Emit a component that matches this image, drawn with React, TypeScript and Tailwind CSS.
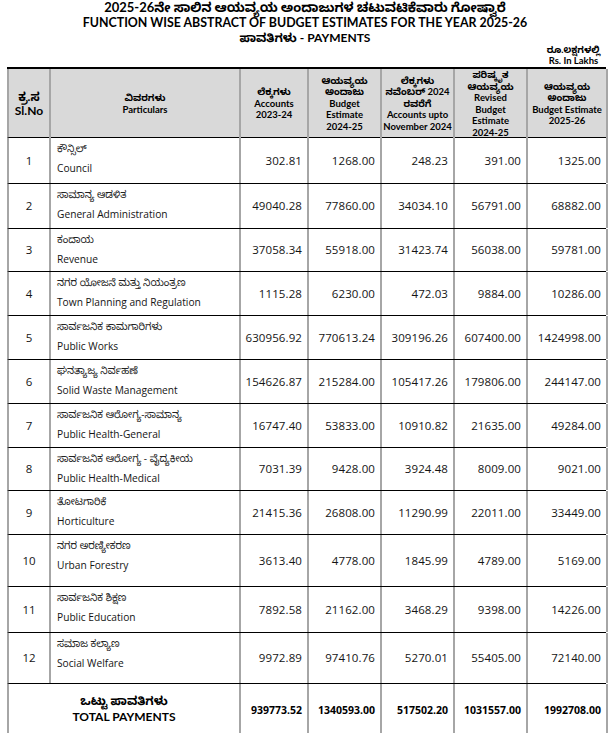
import * as React from 'react';

type Row = {
  no: number;
  kn: string;
  en: string;
  vals: string[];
  h: string;
};

const rows: Row[] = [
  { no: 1, kn: 'ಕೌನ್ಸಿಲ್', en: 'Council', vals: ['302.81', '1268.00', '248.23', '391.00', '1325.00'], h: 'h-[46px]' },
  { no: 2, kn: 'ಸಾಮಾನ್ಯ ಆಡಳಿತ', en: 'General Administration', vals: ['49040.28', '77860.00', '34034.10', '56791.00', '68882.00'], h: 'h-[45px]' },
  { no: 3, kn: 'ಕಂದಾಯ', en: 'Revenue', vals: ['37058.34', '55918.00', '31423.74', '56038.00', '59781.00'], h: 'h-[43px]' },
  { no: 4, kn: 'ನಗರ ಯೋಜನೆ ಮತ್ತು ನಿಯಂತ್ರಣ', en: 'Town Planning and Regulation', vals: ['1115.28', '6230.00', '472.03', '9884.00', '10286.00'], h: 'h-[44px]' },
  { no: 5, kn: 'ಸಾರ್ವಜನಿಕ ಕಾಮಗಾರಿಗಳು', en: 'Public Works', vals: ['630956.92', '770613.24', '309196.26', '607400.00', '1424998.00'], h: 'h-[44px]' },
  { no: 6, kn: 'ಘನತ್ಯಾಜ್ಯ ನಿರ್ವಹಣೆ', en: 'Solid Waste Management', vals: ['154626.87', '215284.00', '105417.26', '179806.00', '244147.00'], h: 'h-[44px]' },
  { no: 7, kn: 'ಸಾರ್ವಜನಿಕ ಆರೋಗ್ಯ-ಸಾಮಾನ್ಯ', en: 'Public Health-General', vals: ['16747.40', '53833.00', '10910.82', '21635.00', '49284.00'], h: 'h-[44px]' },
  { no: 8, kn: 'ಸಾರ್ವಜನಿಕ ಆರೋಗ್ಯ - ವೈದ್ಯಕೀಯ', en: 'Public Health-Medical', vals: ['7031.39', '9428.00', '3924.48', '8009.00', '9021.00'], h: 'h-[43px]' },
  { no: 9, kn: 'ತೋಟಗಾರಿಕೆ', en: 'Horticulture', vals: ['21415.36', '26808.00', '11290.99', '22011.00', '33449.00'], h: 'h-[44px]' },
  { no: 10, kn: 'ನಗರ ಅರಣ್ಯೀಕರಣ', en: 'Urban Forestry', vals: ['3613.40', '4778.00', '1845.99', '4789.00', '5169.00'], h: 'h-[52px]' },
  { no: 11, kn: 'ಸಾರ್ವಜನಿಕ ಶಿಕ್ಷಣ', en: 'Public Education', vals: ['7892.58', '21162.00', '3468.29', '9398.00', '14226.00'], h: 'h-[46px]' },
  { no: 12, kn: 'ಸಮಾಜ ಕಲ್ಯಾಣ', en: 'Social Welfare', vals: ['9972.89', '97410.76', '5270.01', '55405.00', '72140.00'], h: 'h-[51px]' },
];

const totals = ['939773.52', '1340593.00', '517502.20', '1031557.00', '1992708.00'];

const cols = 'grid grid-cols-[42px_190px_68px_73px_73px_73px_80px]';
const vline = 'border-r-2 border-[#a6a6a6]';
const body = "font-['Open_Sans','Noto_Sans_Kannada','Noto_Sans',sans-serif]";
const head = "font-['Lato','Noto_Sans_Kannada','Noto_Sans',sans-serif]";

function HeadCell({ lines }: { lines: string[] }) {
  return (
    <div className={`${vline} flex flex-col items-center justify-center text-center text-[9.5px] leading-[11.5px] font-bold whitespace-nowrap`}>
      {lines.map((l, i) => (
        <span key={i}>{l}</span>
      ))}
    </div>
  );
}

export default function App() {
  return (
    <div className={`w-[610px] bg-white text-black ${body}`}>
      <div className={`${head} font-bold text-center`}>
        <div className="text-[13px] leading-[15px]">2025-26ನೇ ಸಾಲಿನ ಆಯವ್ಯಯ ಅಂದಾಜುಗಳ ಚಟುವಟಿಕೆವಾರು ಗೋಷ್ವಾರೆ</div>
        <div className="text-[12.4px] leading-[15px]">FUNCTION WISE ABSTRACT OF BUDGET ESTIMATES FOR THE YEAR 2025-26</div>
        <div className="text-[12px] leading-[15px]">ಪಾವತಿಗಳು - PAYMENTS</div>
      </div>
      <div className="flex justify-end pr-[10px]">
        <div className={`${head} font-bold text-[9.5px] leading-[10.5px] text-center`}>
          <div>ರೂ.ಲಕ್ಷಗಳಲ್ಲಿ</div>
          <div>Rs. In Lakhs</div>
        </div>
      </div>

      <div className="ml-[7px] w-[599px] mt-[1px] border-t-2 border-black">
        {/* header */}
        <div className={`${cols} h-[69px] bg-[#d9d9d9] border-b border-black border-l-2 border-l-[#a6a6a6] ${head}`}>
          <div className={`${vline} flex flex-col items-center justify-center text-center text-[12px] leading-[14px] font-bold`}>
            <span>ಕ್ರ.ಸ</span>
            <span>Sl.No</span>
          </div>
          <HeadCell lines={['ವಿವರಗಳು', 'Particulars']} />
          <HeadCell lines={['ಲೆಕ್ಕಗಳು', 'Accounts', '2023-24']} />
          <HeadCell lines={['ಆಯವ್ಯಯ', 'ಅಂದಾಜು', 'Budget', 'Estimate', '2024-25']} />
          <HeadCell lines={['ಲೆಕ್ಕಗಳು', 'ನವೆಂಬರ್ 2024', 'ರವರೆಗೆ', 'Accounts upto', 'November 2024']} />
          <HeadCell lines={['ಪರಿಷ್ಕೃತ', 'ಆಯವ್ಯಯ', 'Revised', 'Budget', 'Estimate', '2024-25']} />
          <HeadCell lines={['ಆಯವ್ಯಯ', 'ಅಂದಾಜು', 'Budget Estimate', '2025-26']} />
        </div>

        {rows.map((r) => (
          <div key={r.no} className={`${cols} ${r.h} border-b border-black border-l-2 border-l-[#a6a6a6] text-[#141414]`}>
            <div className={`${vline} flex items-center justify-center text-[11.5px]`}>{r.no}</div>
            <div className={`${vline} flex flex-col pl-[6px] pt-[1px]`}>
              <span className="text-[10px] leading-[18px] text-[#222]">{r.kn}</span>
              <span className="text-[10.2px] leading-[23px]">{r.en}</span>
            </div>
            {r.vals.map((v, i) => (
              <div key={i} className={`${vline} flex items-center justify-end pr-[5px] text-[11.5px] tracking-[0.1px]`}>
                {v}
              </div>
            ))}
          </div>
        ))}

        {/* total */}
        <div className={`${cols} h-[54px] border-l-2 border-l-[#a6a6a6] text-[10.5px] font-bold`}>
          <div className={`col-span-2 ${vline} flex flex-col items-center justify-center pb-[4px] ${head} text-[12px] leading-[16px]`}>
            <span>ಒಟ್ಟು ಪಾವತಿಗಳು</span>
            <span>TOTAL PAYMENTS</span>
          </div>
          {totals.map((v, i) => (
            <div key={i} className={`${vline} flex items-center justify-end pr-[5px]`}>
              {v}
            </div>
          ))}
        </div>
      </div>
    </div>
  );
}
